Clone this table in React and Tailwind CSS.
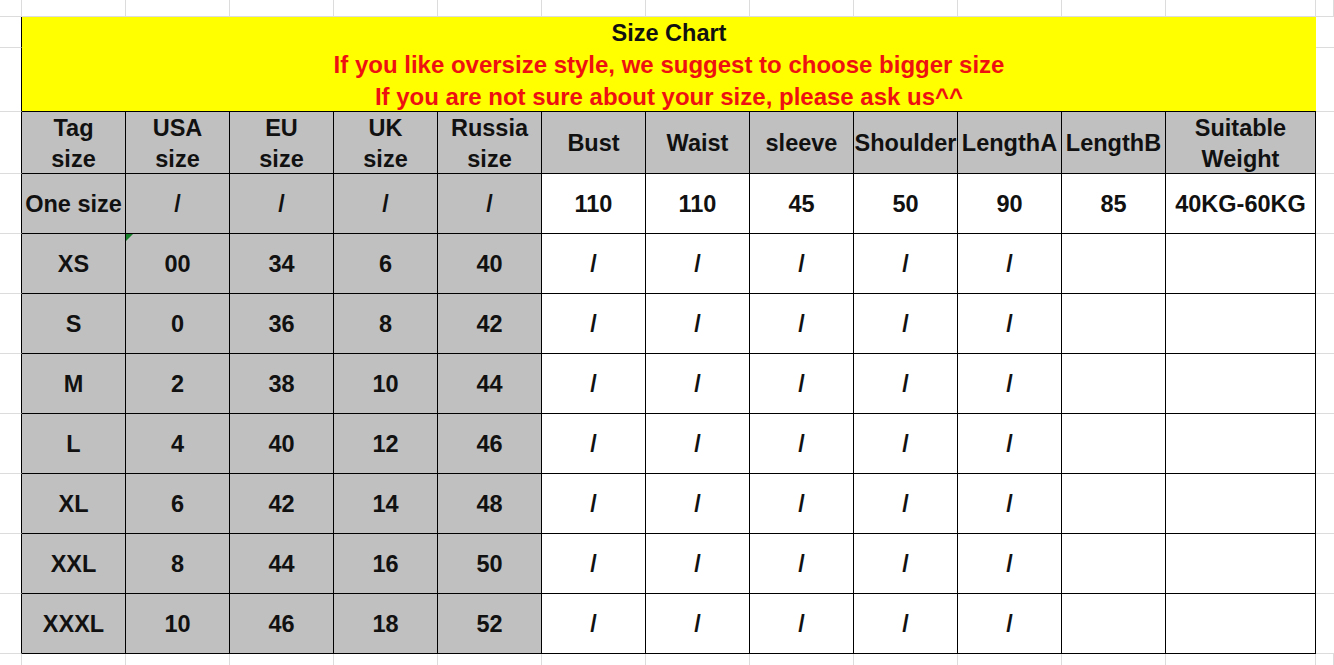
const HEAD = [
  ['Tag', 'size'],
  ['USA', 'size'],
  ['EU', 'size'],
  ['UK', 'size'],
  ['Russia', 'size'],
  ['Bust'],
  ['Waist'],
  ['sleeve'],
  ['Shoulder'],
  ['LengthA'],
  ['LengthB'],
  ['Suitable', 'Weight'],
]

const ROWS = [
  ['One size', '/', '/', '/', '/', '110', '110', '45', '50', '90', '85', '40KG-60KG'],
  ['XS', '00', '34', '6', '40', '/', '/', '/', '/', '/', '', ''],
  ['S', '0', '36', '8', '42', '/', '/', '/', '/', '/', '', ''],
  ['M', '2', '38', '10', '44', '/', '/', '/', '/', '/', '', ''],
  ['L', '4', '40', '12', '46', '/', '/', '/', '/', '/', '', ''],
  ['XL', '6', '42', '14', '48', '/', '/', '/', '/', '/', '', ''],
  ['XXL', '8', '44', '16', '50', '/', '/', '/', '/', '/', '', ''],
  ['XXXL', '10', '46', '18', '52', '/', '/', '/', '/', '/', '', ''],
]

const blank = 'border-r border-b border-[#dcdcdc]'

export default function App() {
  return (
    <div className="h-[665px] w-[1334px] overflow-hidden bg-white font-['Liberation_Sans',Arial,sans-serif] font-bold text-[23.5px] text-[#111]">
      <div className="grid h-full grid-cols-[22px_repeat(11,104px)_150px_1fr] grid-rows-[17px_31px_64px_62px_repeat(8,60px)_1fr]">
        {/* top spreadsheet row */}
        {Array.from({ length: 14 }).map((_, i) => (
          <div key={'t' + i} className={blank} />
        ))}

        {/* yellow title block */}
        <div className="border-r border-b border-r-black border-b-[#dcdcdc]" />
        <div className="col-span-12 row-span-2 flex flex-col items-center justify-center border-b border-black bg-[#ffff00] pt-[2px] leading-[32px]">
          <div>Size Chart</div>
          <div className="text-[24px] text-[#ee1111]">If you like oversize style, we suggest to choose bigger size</div>
          <div className="text-[24px] text-[#ee1111]">If you are not sure about your size, please ask us^^</div>
        </div>
        <div className="border-b border-[#dcdcdc]" />
        <div className="border-r border-b border-r-black border-b-[#dcdcdc]" />
        <div className="border-b border-[#dcdcdc]" />

        {/* header */}
        <div className="border-r border-b border-r-black border-b-[#dcdcdc]" />
        {HEAD.map((h, i) => (
          <div key={'h' + i} className="flex flex-col items-center justify-center border-r border-b border-black bg-[#c0c0c0] pt-[2px] leading-[31px] whitespace-nowrap">
            {h.map((line) => (
              <span key={line}>{line}</span>
            ))}
          </div>
        ))}
        <div className="border-b border-[#dcdcdc]" />

        {/* data rows */}
        {ROWS.map((row, r) => (
          <div key={'r' + r} className="contents">
            <div className="border-r border-b border-r-black border-b-[#dcdcdc]" />
            {row.map((v, c) => (
              <div
                key={c}
                className={`relative flex items-center justify-center border-r border-b border-black pt-[2px] whitespace-nowrap ${c < 5 ? 'bg-[#c0c0c0]' : 'bg-white'}`}
              >
                {r === 1 && c === 1 && (
                  <span className="absolute left-0 top-0 h-0 w-0 border-t-[7px] border-r-[7px] border-t-[#17802a] border-r-transparent" />
                )}
                {v}
              </div>
            ))}
            <div className="border-b border-[#dcdcdc]" />
          </div>
        ))}

        {/* bottom spreadsheet row */}
        {Array.from({ length: 14 }).map((_, i) => (
          <div key={'b' + i} className="border-r border-[#dcdcdc]" />
        ))}
      </div>
    </div>
  )
}
